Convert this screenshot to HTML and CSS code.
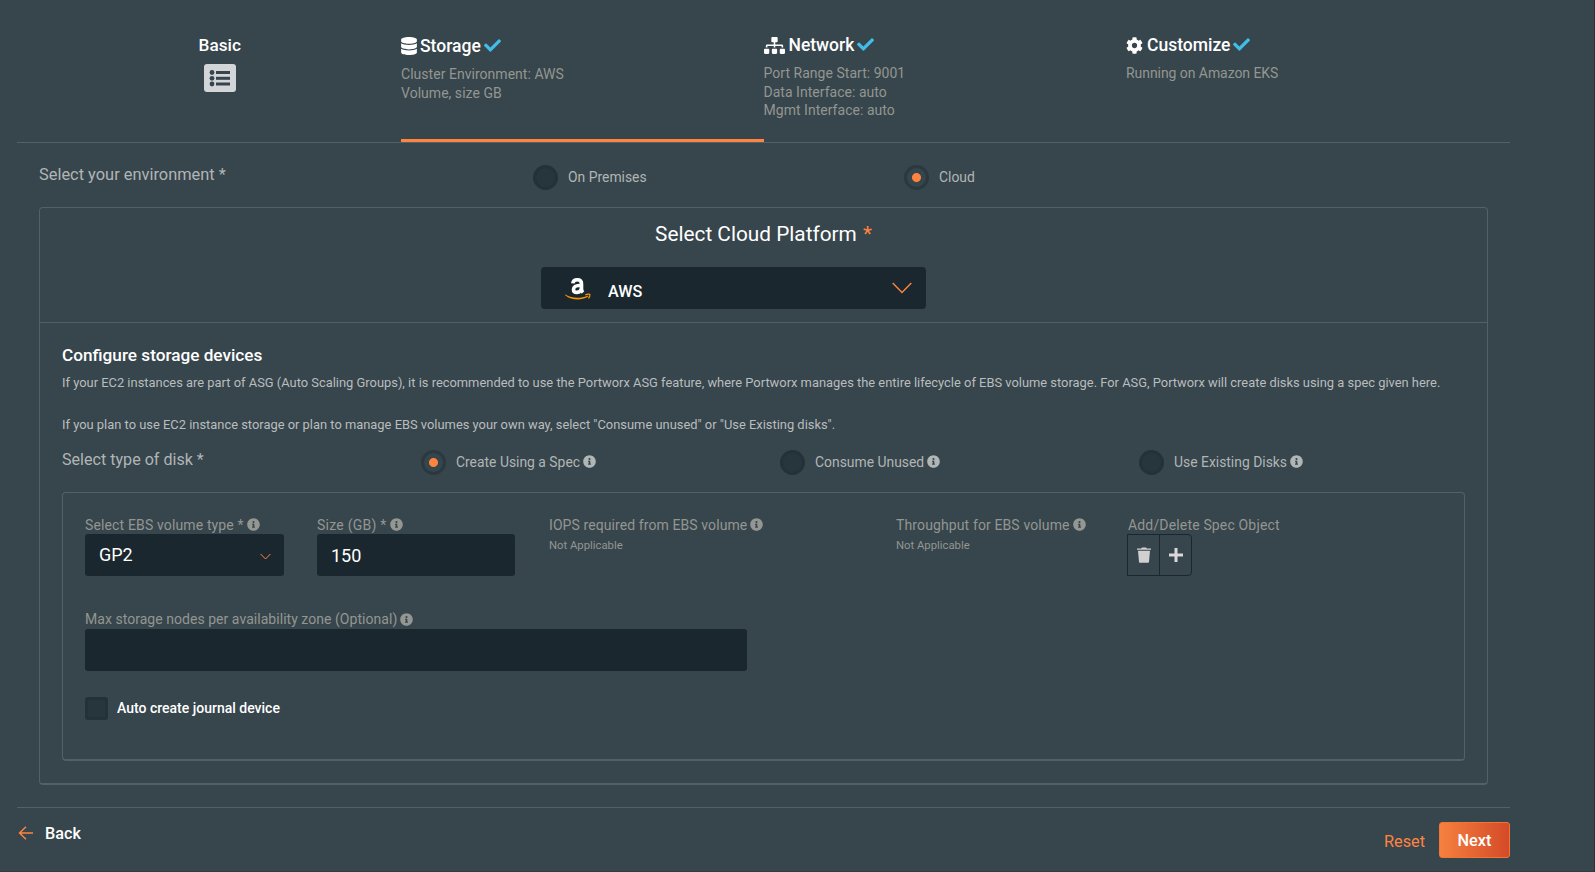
FILE: index.html
```html
<!DOCTYPE html>
<html lang="en">
<head>
<meta charset="utf-8">
<title>Storage configuration</title>
<link rel="stylesheet" href="styles.css">
</head>
<body>
<svg width="0" height="0" class="defs">
  <symbol id="check" viewBox="0 0 512 512"><path d="M173.9 439.4L7.500 273c-10-10-10-26.200 0-36.200l36.200-36.200c10-10 26.200-10 36.200 0L192 312.700 432.100 72.600c10-10 26.200-10 36.200 0l36.200 36.200c10 10 10 26.200 0 36.200L210.100 439.400c-10 10-26.200 10-36.200 0z"/></symbol>
  <symbol id="info" viewBox="0 0 512 512"><path d="M256 8C119 8 8 119 8 256s111 248 248 248 248-111 248-248S393 8 256 8zm0 110a42 42 0 1 1 0 84 42 42 0 0 1 0-84zm56 254c0 7-5 12-12 12h-88c-7 0-12-5-12-12v-24c0-7 5-12 12-12h12v-64h-12c-7 0-12-5-12-12v-24c0-7 5-12 12-12h64c7 0 12 5 12 12v100h12c7 0 12 5 12 12z"/></symbol>
</svg>
<main class="wizard">
  <nav class="tabs">
    <div class="tab tab-basic">
      <span class="tab-title t-basic">Basic</span>
      <svg class="list-icon" viewBox="0 0 32 28"><rect width="32" height="28" rx="3" fill="#d2d6d9"/><g fill="#36454c"><circle cx="8" cy="8.500" r="2.400"/><circle cx="8" cy="14.300" r="2.400"/><circle cx="8" cy="20" r="2.400"/><rect x="12" y="7" width="14" height="3"/><rect x="12" y="12.800" width="14" height="3"/><rect x="12" y="18.500" width="14" height="3"/></g></svg>
    </div>
    <div class="tab active">
      <div class="tab-head low"><svg class="i-db" viewBox="0 0 448 512"><path d="M448 73v46c0 40-100 73-224 73S0 159 0 119V73C0 33 100 0 224 0s224 33 224 73zM448 176v103c0 40-100 73-224 73S0 319 0 279V176c48 33 136 48 224 48s176-15 224-48zm0 160v103c0 40-100 73-224 73S0 479 0 439V336c48 33 136 48 224 48s176-15 224-48z"/></svg><span class="tab-title t-storage">Storage</span><svg class="i-check"><use href="#check"/></svg></div>
      <div class="tab-sub low"><span>Cluster Environment: AWS</span><span>Volume, size GB</span></div>
    </div>
    <div class="tab">
      <div class="tab-head"><svg class="i-net" viewBox="0 0 640 512"><path d="M128 352H32c-18 0-32 14-32 32v96c0 18 14 32 32 32h96c18 0 32-14 32-32v-96c0-18-14-32-32-32zm-24-80h192v48h48v-48h192v48h48v-57c0-21-17-39-39-39H344v-64h40c18 0 32-14 32-32V32c0-18-14-32-32-32H256c-18 0-32 14-32 32v96c0 18 14 32 32 32h40v64H95c-21 0-39 17-39 39v57h48zm264 80h-96c-18 0-32 14-32 32v96c0 18 14 32 32 32h96c18 0 32-14 32-32v-96c0-18-14-32-32-32zm240 0h-96c-18 0-32 14-32 32v96c0 18 14 32 32 32h96c18 0 32-14 32-32v-96c0-18-14-32-32-32z"/></svg><span class="tab-title t-network">Network</span><svg class="i-check"><use href="#check"/></svg></div>
      <div class="tab-sub"><span>Port Range Start: 9001</span><span>Data Interface: auto</span><span>Mgmt Interface: auto</span></div>
    </div>
    <div class="tab">
      <div class="tab-head"><svg class="i-cog" viewBox="0 0 512 512"><path d="M487.400 315.700l-42.600-24.600c4.300-23.200 4.300-47 0-70.200l42.600-24.600c4.900-2.800 7.100-8.600 5.500-14-11.100-35.600-30-67.800-54.700-94.600-3.800-4.100-10-5.100-14.800-2.300L380.800 110c-17.900-15.400-38.500-27.300-60.800-35.100V25.800c0-5.600-3.900-10.500-9.400-11.700-36.700-8.200-74.300-7.800-109.200 0-5.500 1.200-9.400 6.100-9.400 11.700V75c-22.200 7.900-42.800 19.800-60.800 35.100L88.700 85.500c-4.900-2.800-11-1.900-14.800 2.300-24.700 26.700-43.600 58.900-54.700 94.600-1.700 5.400.6 11.200 5.500 14L67.300 221c-4.300 23.200-4.300 47 0 70.200l-42.600 24.600c-4.900 2.800-7.100 8.600-5.500 14 11.100 35.600 30 67.800 54.700 94.600 3.800 4.100 10 5.100 14.800 2.300l42.600-24.600c17.900 15.400 38.500 27.300 60.800 35.100v49.200c0 5.600 3.900 10.500 9.400 11.700 36.700 8.200 74.300 7.800 109.200 0 5.500-1.200 9.400-6.100 9.400-11.700v-49.200c22.200-7.900 42.800-19.800 60.800-35.100l42.600 24.600c4.900 2.800 11 1.900 14.800-2.300 24.700-26.700 43.600-58.900 54.700-94.600 1.500-5.500-.7-11.300-5.600-14.100zM256 336c-44.100 0-80-35.900-80-80s35.900-80 80-80 80 35.900 80 80-35.900 80-80 80z"/></svg><span class="tab-title t-customize">Customize</span><svg class="i-check"><use href="#check"/></svg></div>
      <div class="tab-sub eks"><span>Running on Amazon EKS</span></div>
    </div>
  </nav>

  <section class="environment">
    <span class="question q-env">Select your environment *</span>
    <label class="choice"><i class="radio"></i><span>On Premises</span></label>
    <label class="choice"><i class="radio on"></i><span>Cloud</span></label>
  </section>

  <section class="card">
    <div class="platform">
      <h2>Select Cloud Platform <em>*</em></h2>
      <div class="cloud-select">
        <svg class="amazon" viewBox="0 0 26 22"><path fill="none" stroke="#fff" stroke-width="3.600" d="M7.800 5.400C8.100 2.900 9.800 1.800 12.300 1.800c2.900 0 4.200 1.400 4.200 3.900v5.200c0 1.500.5 2.500 1.500 3.500M16.500 7.200c-5.300 0-8 1-8 4.200 0 2 1.300 3 3.300 3 3 0 4.700-2 4.700-5.300"/><path fill="#f79400" d="M.4 16.600c6.600 3.900 15 4.300 21.900 1.200.8-.3 1.300.5.500 1C16.300 22.900 6.300 22.500.200 17.200c-.3-.3-.1-.8.2-.6z"/><path fill="none" stroke="#f79400" stroke-width="1.200" d="M20.300 17c1.500-.9 3.400-1 4.600-.6.200 1.300-.4 2.800-1.500 4"/></svg>
        <span class="c-aws">AWS</span>
        <svg class="chev-lg" viewBox="0 0 20 12"><path d="M.7 1l9.300 9.600L19.300 1"/></svg>
      </div>
    </div>
    <div class="storage">
      <h3>Configure storage devices</h3>
      <p><span class="p1">If your EC2 instances are part of ASG (Auto Scaling Groups), it is recommended to use the Portworx ASG feature, where Portworx manages the entire lifecycle of EBS volume storage. For ASG, Portworx will create disks using a spec given here.</span></p>
      <p class="second"><span class="p2">If you plan to use EC2 instance storage or plan to manage EBS volumes your own way, select "Consume unused" or "Use Existing disks".</span></p>
      <div class="disk-type">
        <span class="question q-disk">Select type of disk *</span>
        <label class="choice"><i class="radio on"></i><span>Create Using a Spec</span><svg class="info"><use href="#info"/></svg></label>
        <label class="choice"><i class="radio"></i><span>Consume Unused</span><svg class="info"><use href="#info"/></svg></label>
        <label class="choice"><i class="radio"></i><span>Use Existing Disks</span><svg class="info"><use href="#info"/></svg></label>
      </div>
      <div class="spec">
        <div class="fields">
          <div class="field"><label><span class="l1">Select EBS volume type *</span><svg class="info"><use href="#info"/></svg></label><div class="input"><span class="v1">GP2</span><svg class="chev-sm" viewBox="0 0 11 7"><path d="M.6 1l4.900 5 4.900-5"/></svg></div></div>
          <div class="field size"><label><span class="l2">Size (GB) *</span><svg class="info"><use href="#info"/></svg></label><div class="input"><span class="v2">150</span></div></div>
          <div class="field"><label><span class="l3">IOPS required from EBS volume</span><svg class="info"><use href="#info"/></svg></label><small>Not Applicable</small></div>
          <div class="field"><label><span class="l4">Throughput for EBS volume</span><svg class="info"><use href="#info"/></svg></label><small>Not Applicable</small></div>
          <div class="field"><label><span class="l5">Add/Delete Spec Object</span></label>
            <div class="btns"><button><svg width="14" height="16" viewBox="0 0 14 16"><path fill="#d2cfd0" d="M0 1.500h4L5 .4h4l1 1.100h4v1.300H0z"/><path fill="#d2cfd0" d="M1 3.800h12l-1 11c0 .6-.5 1-1 1H3c-.6 0-1-.4-1-1z"/></svg></button><button><svg width="14" height="14" viewBox="0 0 14 14"><path fill="#dbd8d8" d="M5.500 0h3v5.500H14v3H8.500V14h-3V8.500H0v-3h5.500z"/></svg></button></div>
          </div>
        </div>
        <div class="field wide"><label><span class="l6">Max storage nodes per availability zone (Optional)</span><svg class="info"><use href="#info"/></svg></label><div class="input"></div></div>
        <label class="journal"><i class="box"></i><span>Auto create journal device</span></label>
      </div>
    </div>
  </section>

  <footer>
    <a class="back"><svg width="16" height="14" viewBox="0 0 16 14"><path d="M8 .7L1.500 7 8 13.300M1.500 7H15"/></svg><span>Back</span></a>
    <div class="actions"><a class="reset">Reset</a><button class="next">Next</button></div>
  </footer>
</main>
</body>
</html>
```
FILE: styles.css
```css
* { box-sizing: border-box; }
body {
  margin: 0;
  height: 872px;
  overflow: hidden;
  background: #37454c;
  border-right: 1px solid #2c3338;
  border-bottom: 1px solid #343841;
  color: #fff;
  font-family: Roboto, "Liberation Sans", sans-serif;
}
.defs { display: block; position: absolute; }
svg { flex: none; display: block; }
span { white-space: nowrap; }
.wizard { width: 1493px; margin-left: 17px; }

.tabs {
  display: grid;
  grid-template-columns: repeat(4, 362.5px);
  height: 143px;
  padding-left: 21.5px;
  border-bottom: 1px solid #526168;
}
.tab { padding-top: 34px; height: 142px; }
.tab.active { border-bottom: 3px solid #ff8440; }
.tab-basic { display: flex; flex-direction: column; align-items: center; }
.tab-title { font-size: 17.500px; font-weight: 500; line-height: 22px; }
.t-basic { font-size: 17.200px; }
.list-icon { width: 32px; height: 28px; margin-top: 8px; }
.tab-head { display: flex; align-items: center; height: 22px; fill: #fff; }
.tab-head.low { position: relative; top: 1px; }
.i-db { width: 16px; height: 18px; margin-right: 3px; }
.i-net { width: 21px; height: 17px; margin-right: 4px; }
.i-cog { width: 17px; height: 17px; margin-right: 4px; }
.i-check { width: 17px; height: 17px; margin: 0 0 1px 3px; fill: #41bde8; }
.tab-sub { display: flex; flex-direction: column; margin-top: 8px; font-size: 14px; letter-spacing: .03px; line-height: 18.700px; color: #939691; }
.tab-sub.low { margin-top: 9px; }
.tab-sub.eks { letter-spacing: -.06px; }

.environment {
  display: grid;
  grid-template-columns: 494px 371px 1fr;
  height: 64px;
  padding: 21px 0 0 22px;
}
.question { font-size: 16.100px; line-height: 20px; color: #b0b5b6; }
.q-env { font-size: 16.400px; padding-top: 1px; }
.choice { display: flex; align-items: center; height: 26px; font-size: 13.900px; color: #b0b5b6; }
.choice span { padding-bottom: 1px; }
.environment .radio, .disk-type .radio { position: relative; top: .5px; }
.radio {
  width: 25px; height: 25px; margin-right: 10px; flex: none;
  border: 3.500px solid #233238; border-radius: 50%;
  background: #27363d;
}
.radio.on { border-color: #2a393f; background: radial-gradient(circle, #ff8440 4px, #36454b 5px); }
.info { width: 13px; height: 13px; margin-left: 3px; fill: currentColor; }

.card { margin: 0 22px; height: 578px; border: 1px solid #526168; border-bottom-width: 2px; border-radius: 4px; }
.platform { height: 115px; border-bottom: 1px solid #526168; }
h2 { margin: 0; padding-top: 13px; font-size: 20.800px; line-height: 26px; font-weight: 400; text-align: center; }
h2 em { margin-left: 1px; color: #ff8440; font-style: normal; }
.cloud-select {
  display: flex; align-items: center;
  width: 385px; height: 42px; margin: 20px 0 0 501px; padding: 0 14px 0 24px;
  background: #1a272e; border-radius: 4px;
  font-size: 16.200px; font-weight: 500;
}
.amazon { width: 26px; height: 22px; margin: 2px 17px 0 0; }
.c-aws { padding-top: 6px; }
.chev-lg { width: 20px; height: 12px; margin-left: auto; }
.chev-lg path, .chev-sm path, .back path { fill: none; stroke: #ff8440; stroke-width: 1.400; }
.chev-sm path { stroke-width: 1; }

.storage { padding: 21px 22px 0; }
h3 { margin: 0; font-size: 17.200px; line-height: 22px; font-weight: 500; }
p { margin: 8px 0 0; font-size: 12.900px; line-height: 18px; color: #b9bdbe; }
p.second { margin-top: 24px; }
.disk-type { display: grid; grid-template-columns: 359px 359px 359px 1fr; margin-top: 15px; height: 43px; }
.q-disk { padding-top: 1px; }
.disk-type .choice .info { margin-bottom: 2px; }

.spec { height: 269px; padding: 22px 22px; border: 1px solid #526168; border-bottom-width: 2px; border-radius: 4px; }
.fields { display: grid; grid-template-columns: 232px 232px 347px 232px 1fr; height: 95px; }
.field { width: 199px; }
.field.size { width: 198px; }
.field.wide { width: 662px; }
.field label { display: flex; align-items: center; height: 19px; font-size: 14px; color: #939691; }
.field.wide label span { padding-bottom: 1px; }
.l1 { letter-spacing: .14px; }
.l2 { letter-spacing: .24px; }
.l3 { letter-spacing: .09px; }
.l4 { letter-spacing: .12px; }
.l5 { letter-spacing: .16px; }
.l6 { letter-spacing: .04px; }
.input {
  display: flex; align-items: center; justify-content: space-between;
  height: 42px; padding: 0 14px; background: #1a272e; border-radius: 3px;
  font-size: 18px; line-height: 42px;
}
.input .chev-sm { margin-right: -1px; }
.v2 { padding-top: 1px; }
small { display: block; font-size: 11.300px; line-height: 24px; color: #939691; }
.chev-sm { width: 11px; height: 7px; margin-top: 2px; }
.btns { display: flex; width: 65px; height: 42px; margin-left: -1px; border: 1px solid #1a272e; border-radius: 0 4px 4px 0; }
.btns button { flex: 1; display: flex; align-items: center; justify-content: center; padding: 0; border: 0; background: none; }
.btns button + button { border-left: 1px solid #1a272e; }
.journal { display: flex; align-items: center; margin-top: 26px; height: 23px; font-size: 14px; font-weight: 500; }
.journal span { padding-bottom: 2px; }
.box { width: 23px; height: 23px; margin-right: 9px; border: 3px solid #233238; border-radius: 3px; background: #27363d; }

footer { display: flex; justify-content: space-between; margin-top: 22px; border-top: 1px solid #526168; }
.back { display: flex; align-items: center; gap: 11px; height: 22px; margin: 14px 0 0 1px; font-size: 16.200px; font-weight: 500; }
.actions { display: flex; align-items: center; gap: 14px; margin-top: 14px; height: 36px; }
.reset { font-size: 16.300px; color: #ff8440; padding-top: 2px; }
.next { width: 71px; height: 36px; padding: 0; border: 1px solid #f27533; border-radius: 3px; background: linear-gradient(90deg, #f5813f, #d44a28); color: #fff; font: 500 16.300px Roboto, "Liberation Sans", sans-serif; }
```
